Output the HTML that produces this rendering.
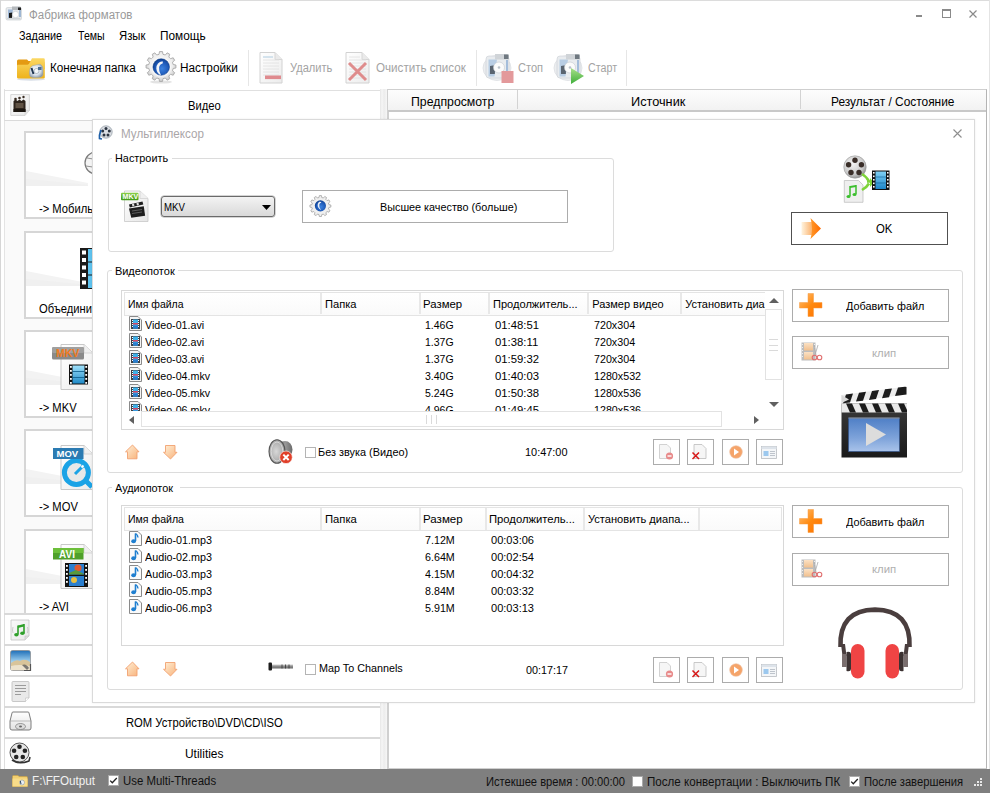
<!DOCTYPE html>
<html><head><meta charset="utf-8">
<style>
*{margin:0;padding:0;box-sizing:border-box}
html,body{width:990px;height:793px;overflow:hidden;background:#fff}
body{position:relative;font-family:"Liberation Sans",sans-serif;font-size:12px;color:#000}
.a{position:absolute}
.t{position:absolute;white-space:nowrap;line-height:12px;transform-origin:0 0}
.box{position:absolute;border:1px solid #dcdcdc}
.btn{position:absolute;border:1px solid #acacac;background:#fff}
.sep{position:absolute;width:1px;background:#e6e6e6}
.hl{position:absolute;height:2px;background:#d9d9d9}
.vd{position:absolute;width:2px;background:#e8e8e8}
svg{position:absolute;overflow:visible}
</style></head><body>

<!-- window border -->
<div class="a" style="left:0;top:0;width:990px;height:1px;background:#dcdcdc"></div>
<div class="a" style="left:0;top:0;width:1px;height:769px;background:#d6d6d6"></div>
<div class="a" style="left:989px;top:0;width:1px;height:769px;background:#e4e4e4"></div>

<!-- title bar -->
<div class="t" style="left:28.70px;top:9px;font-size:12px;color:#9a9a9a;transform:scaleX(0.9593)">Фабрика форматов</div>
<div class="a" style="left:916px;top:15px;width:6px;height:2px;background:#8a8a8a"></div>
<div class="a" style="left:942px;top:9px;width:9px;height:9px;border:1px solid #8a8a8a;border-top-width:2px"></div>
<svg style="left:969px;top:10px" width="8" height="8"><path d="M0.5 0.5L7.5 7.5M7.5 0.5L0.5 7.5" stroke="#8a8a8a" stroke-width="1.2"/></svg>

<!-- menu -->
<div class="t" style="left:18.90px;top:30px;font-size:12px;color:#000;transform:scaleX(0.9042)">Задание</div><div class="t" style="left:77.90px;top:30px;font-size:12px;color:#000;transform:scaleX(0.8833)">Темы</div><div class="t" style="left:118.66px;top:30px;font-size:12px;color:#000;transform:scaleX(0.9407)">Язык</div><div class="t" style="left:159.72px;top:30px;font-size:12px;color:#000;transform:scaleX(0.9844)">Помощь</div>

<!-- toolbar -->
<div class="t" style="left:49.62px;top:62px;font-size:12px;color:#000;transform:scaleX(0.9759)">Конечная папка</div><div class="t" style="left:179.52px;top:62px;font-size:12px;color:#000;transform:scaleX(0.9828)">Настройки</div><div class="t" style="left:289.50px;top:62px;font-size:12px;color:#a3a3a3;transform:scaleX(0.9239)">Удалить</div><div class="t" style="left:375.80px;top:62px;font-size:12px;color:#a3a3a3;transform:scaleX(0.9677)">Очистить список</div><div class="t" style="left:518.30px;top:62px;font-size:12px;color:#a3a3a3;transform:scaleX(0.9222)">Стоп</div><div class="t" style="left:587.80px;top:62px;font-size:12px;color:#a3a3a3;transform:scaleX(0.8909)">Старт</div>
<div class="sep" style="left:248px;top:50px;height:36px"></div>
<div class="sep" style="left:476px;top:50px;height:36px"></div>
<div class="sep" style="left:626px;top:50px;height:36px"></div>

<!-- LEFT PANEL -->
<div class="a" style="left:4px;top:89px;width:378px;height:680px;background:#fff;border-left:1px solid #e4e4e4"></div>
<div class="a" style="left:4px;top:90px;width:378px;height:31px;border:1px solid #e0e0e0;border-bottom-color:#dadada;background:#fff"></div>
<div class="t" style="left:187.56px;top:100px;font-size:12px;color:#000;transform:scaleX(0.9353)">Видео</div>
<div class="a" style="left:5px;top:121px;width:376px;height:493px;background:#fafafa"></div>
<!-- items -->
<div class="a" style="left:24px;top:131px;width:120px;height:88px;border:2px solid #d6d6d6;background:#fff;overflow:hidden"><svg style="left:0;top:0" width="120" height="90"><path d="M0 38L62 50L62 53L0 53Z" fill="#f3f3f3"/><path d="M0 46L62 52L62 53L0 53Z" fill="#eeeeee" opacity="0.5"/></svg></div>
<div class="t" style="left:39.40px;top:203px;font-size:12px;color:#000;transform:scaleX(0.9325)">-&gt; Мобильные</div>
<svg style="left:83px;top:149px" width="14" height="42"><circle cx="13" cy="14" r="11" fill="#f4f4f4" stroke="#7a7a7a" stroke-width="1.2"/><path d="M4 9Q13 12 22 9M3 17Q13 20 23 17M13 3Q7 14 13 25" stroke="#888" stroke-width="0.9" fill="none"/><path d="M9 35L13 31V39Z" fill="#111"/></svg>

<div class="a" style="left:24px;top:231px;width:120px;height:88px;border:2px solid #d6d6d6;background:#fff;overflow:hidden"><svg style="left:0;top:0" width="120" height="90"><path d="M0 38L62 50L62 53L0 53Z" fill="#f3f3f3"/><path d="M0 46L62 52L62 53L0 53Z" fill="#eeeeee" opacity="0.5"/></svg></div>
<div class="t" style="left:39.40px;top:303px;font-size:12px;color:#000;transform:scaleX(0.9325)">Объединить</div>
<svg style="left:80px;top:248px" width="14" height="40"><rect x="0" y="0" width="14" height="41" fill="#1a1a1a"/><rect x="8" y="1" width="6" height="39" fill="#5ec2ee"/><g fill="#fff"><rect x="2" y="2.5" width="4" height="4"/><rect x="2" y="10" width="4" height="4"/><rect x="2" y="17.5" width="4" height="4"/><rect x="2" y="25" width="4" height="4"/><rect x="2" y="32.5" width="4" height="4"/></g><path d="M8 14H14M8 27H14" stroke="#1a1a1a" stroke-width="1"/></svg>

<div class="a" style="left:24px;top:330px;width:120px;height:88px;border:2px solid #d6d6d6;background:#fff;overflow:hidden"><svg style="left:0;top:0" width="120" height="90"><path d="M0 38L62 50L62 53L0 53Z" fill="#f3f3f3"/><path d="M0 46L62 52L62 53L0 53Z" fill="#eeeeee" opacity="0.5"/></svg></div>
<div class="t" style="left:39.40px;top:402px;font-size:12px;color:#000;transform:scaleX(0.9325)">-&gt; MKV</div>
<svg style="left:51px;top:343px" width="42" height="48"><defs><linearGradient id="ipg" x1="0" y1="0" x2="1" y2="1"><stop offset="0" stop-color="#ffffff"/><stop offset="1" stop-color="#ececec"/></linearGradient><linearGradient id="ifl" x1="0" y1="0" x2="0" y2="1"><stop offset="0" stop-color="#9ee0fa"/><stop offset="1" stop-color="#1f8ac8"/></linearGradient></defs>
<path d="M10 1.5H33L42 10V46.5H10Z" fill="url(#ipg)" stroke="#c9c9c9" stroke-width="1"/><path d="M33 1.5V10H42" fill="#f0f0f0" stroke="#cfcfcf" stroke-width="0.8"/>
<rect x="1" y="4" width="32" height="12.5" rx="1.5" fill="#8a8a8a"/><rect x="1" y="4" width="32" height="6" rx="1.5" fill="#a0a0a0"/>
<text x="5" y="14.3" font-family="Liberation Sans" font-size="10.5" font-weight="bold" fill="#f07a20">MKV</text>
<rect x="18" y="21.5" width="19" height="20" fill="#111"/><rect x="21.5" y="22.5" width="12" height="18" fill="url(#ifl)"/><path d="M21.5 28.5H33.5M21.5 34.5H33.5" stroke="#0a5a8a" stroke-width="0.8"/>
<g fill="#fff"><rect x="19" y="23" width="1.8" height="1.8"/><rect x="19" y="27" width="1.8" height="1.8"/><rect x="19" y="31" width="1.8" height="1.8"/><rect x="19" y="35" width="1.8" height="1.8"/><rect x="19" y="39" width="1.8" height="1.8"/><rect x="34.3" y="23" width="1.8" height="1.8"/><rect x="34.3" y="27" width="1.8" height="1.8"/><rect x="34.3" y="31" width="1.8" height="1.8"/><rect x="34.3" y="35" width="1.8" height="1.8"/><rect x="34.3" y="39" width="1.8" height="1.8"/></g></svg>

<div class="a" style="left:24px;top:429px;width:120px;height:88px;border:2px solid #d6d6d6;background:#fff;overflow:hidden"><svg style="left:0;top:0" width="120" height="90"><path d="M0 38L62 50L62 53L0 53Z" fill="#f3f3f3"/><path d="M0 46L62 52L62 53L0 53Z" fill="#eeeeee" opacity="0.5"/></svg></div>
<div class="t" style="left:39.40px;top:501px;font-size:12px;color:#000;transform:scaleX(0.9325)">-&gt; MOV</div>
<svg style="left:52px;top:444px" width="42" height="47">
<path d="M9 1.5H32L41 10V45.5H9Z" fill="url(#ipg)" stroke="#c9c9c9" stroke-width="1"/><path d="M32 1.5V10H41" fill="#f0f0f0" stroke="#cfcfcf" stroke-width="0.8"/>
<circle cx="24.4" cy="28.6" r="12" fill="#e8e8e8" stroke="#1ba3e6" stroke-width="5"/><path d="M33 36L40 43" stroke="#1ba3e6" stroke-width="5"/><path d="M23 30L31.5 21.5" stroke="#1ba3e6" stroke-width="3"/><path d="M29.5 23.5L31.5 21.5" stroke="#fff" stroke-width="2"/>
<rect x="1" y="4" width="30.5" height="11" fill="#2b7bb2"/>
<text x="4.5" y="13.3" font-family="Liberation Sans" font-size="9.5" font-weight="bold" fill="#fff">MOV</text></svg>

<div class="a" style="left:24px;top:529px;width:120px;height:86px;border:2px solid #d6d6d6;background:#fff;overflow:hidden"><svg style="left:0;top:0" width="120" height="90"><path d="M0 38L62 50L62 53L0 53Z" fill="#f3f3f3"/><path d="M0 46L62 52L62 53L0 53Z" fill="#eeeeee" opacity="0.5"/></svg></div>
<div class="t" style="left:39.40px;top:601px;font-size:12px;color:#000;transform:scaleX(0.9325)">-&gt; AVI</div>
<svg style="left:52px;top:543px" width="42" height="47">
<path d="M9 1.5H32L41 10V45.5H9Z" fill="url(#ipg)" stroke="#c9c9c9" stroke-width="1"/><path d="M32 1.5V10H41" fill="#f0f0f0" stroke="#cfcfcf" stroke-width="0.8"/>
<rect x="13" y="20" width="23" height="24" fill="#141414"/><rect x="17" y="21" width="15" height="10.5" fill="#2a7fd0"/><rect x="17" y="33" width="15" height="10" fill="#2a7fd0"/><circle cx="26" cy="25" r="3.5" fill="#e05a30"/><circle cx="22" cy="37" r="3" fill="#e8c040"/><path d="M17 30L24 27L32 31V31.5H17Z" fill="#5a9a3a"/>
<g fill="#fff"><rect x="14" y="22" width="1.8" height="1.8"/><rect x="14" y="26" width="1.8" height="1.8"/><rect x="14" y="30" width="1.8" height="1.8"/><rect x="14" y="34" width="1.8" height="1.8"/><rect x="14" y="38" width="1.8" height="1.8"/><rect x="33.2" y="22" width="1.8" height="1.8"/><rect x="33.2" y="26" width="1.8" height="1.8"/><rect x="33.2" y="30" width="1.8" height="1.8"/><rect x="33.2" y="34" width="1.8" height="1.8"/><rect x="33.2" y="38" width="1.8" height="1.8"/></g>
<rect x="1" y="5" width="30.5" height="11.5" fill="#4fa02a"/><rect x="1" y="5" width="30.5" height="5" fill="#6cbf3a"/>
<text x="7" y="14.5" font-family="Liberation Sans" font-size="10" font-weight="bold" fill="#fff">AVI</text></svg>

<!-- bottom rows -->
<div class="a" style="left:4px;top:613px;width:378px;height:156px;background:#fff;border-left:1px solid #dedede;border-right:1px solid #dedede"></div>
<div class="hl" style="left:4px;top:613px;width:378px"></div>
<div class="hl" style="left:4px;top:644px;width:378px"></div>
<div class="hl" style="left:4px;top:675px;width:378px"></div>
<div class="hl" style="left:4px;top:706px;width:378px"></div>
<div class="hl" style="left:4px;top:737px;width:378px"></div>
<div class="t" style="left:125.96px;top:717px;font-size:12px;color:#000;transform:scaleX(0.9367)">ROM Устройство\DVD\CD\ISO</div><div class="t" style="left:184.81px;top:748px;font-size:12px;color:#000;transform:scaleX(0.9947)">Utilities</div>

<!-- RIGHT TABLE -->
<div class="a" style="left:380px;top:89px;width:8px;height:680px;background:linear-gradient(to right,#e6e6e6,#f6f6f6 25%,#ececec 50%,#f4f4f4 80%,#fff)"></div>
<div class="a" style="left:387px;top:89px;width:600px;height:680px;border:1px solid #cfcfcf;border-left:2px solid #d0d0d0;border-right-color:#b4b4b4;background:#fff"></div>
<div class="a" style="left:388px;top:90px;width:598px;height:22px;background:linear-gradient(#fdfdfd,#f2f2f2);border-bottom:2px solid #c9c9c9"></div>
<div class="a" style="left:517px;top:90px;width:1px;height:19px;background:#d3d3d3"></div>
<div class="a" style="left:800px;top:90px;width:1px;height:19px;background:#d3d3d3"></div>
<div class="t" style="left:410.68px;top:96px;font-size:12px;color:#000;transform:scaleX(1.0238)">Предпросмотр</div><div class="t" style="left:630.94px;top:96px;font-size:12px;color:#000;transform:scaleX(1.0600)">Источник</div><div class="t" style="left:831.11px;top:96px;font-size:12px;color:#000;transform:scaleX(0.9919)">Результат / Состояние</div>

<!-- STATUS BAR -->
<div class="a" style="left:0;top:769px;width:990px;height:24px;background:#7f7f7f"></div>
<div class="t" style="left:31.63px;top:775px;font-size:12px;color:#f2f2f2;transform:scaleX(0.9734)">F:\FFOutput</div><div class="t" style="left:122.75px;top:775px;font-size:12px;color:#111;transform:scaleX(0.9495)">Use Multi-Threads</div><div class="t" style="left:486.37px;top:776px;font-size:12px;color:#111;transform:scaleX(0.9304)">Истекшее время : 00:00:00</div><div class="t" style="left:646.53px;top:776px;font-size:12px;color:#111;transform:scaleX(0.9658)">После конвертации : Выключить ПК</div><div class="t" style="left:864.07px;top:776px;font-size:12px;color:#111;transform:scaleX(0.9333)">После завершения</div>
<div class="a" style="left:108px;top:775px;width:11px;height:11px;background:#fff;border:1px solid #aaa"></div>
<svg style="left:108px;top:775px" width="11" height="11"><path d="M2.2 5.6L4.3 7.8L8.8 3" fill="none" stroke="#222" stroke-width="1.3"/></svg>
<div class="a" style="left:632px;top:776px;width:11px;height:11px;background:#fff;border:1px solid #aaa"></div>
<div class="a" style="left:849px;top:776px;width:11px;height:11px;background:#fff;border:1px solid #aaa"></div>
<svg style="left:849px;top:776px" width="11" height="11"><path d="M2.2 5.6L4.3 7.8L8.8 3" fill="none" stroke="#222" stroke-width="1.3"/></svg>
<svg style="left:974px;top:778px" width="9" height="9"><g fill="#e8e8e8"><rect x="6" y="0" width="2" height="2"/><rect x="3" y="3" width="2" height="2"/><rect x="6" y="3" width="2" height="2"/><rect x="0" y="6" width="2" height="2"/><rect x="3" y="6" width="2" height="2"/><rect x="6" y="6" width="2" height="2"/></g></svg>
<!-- title icon -->
<svg style="left:4px;top:5px" width="18" height="16">
<path d="M2 4Q2 2.5 3.5 2.5H16Q17.5 2.5 17.5 4V13.5Q17.5 15 16 15H3.5Q2 15 2 13.5Z" fill="#e6e9ec" stroke="#c4c9ce" stroke-width="0.6"/>
<path d="M4 4.5H9L7.5 14H4Z" fill="#9fb8d6"/><path d="M5 8L8.5 7.5L8 13H5Z" fill="#1a1a1a"/>
<circle cx="11.5" cy="9.5" r="3.2" fill="#ffffff" stroke="#b8c0c8" stroke-width="0.5"/>
<path d="M8 1.5H16Q17 1.5 17 3V5H8Z" fill="#b4b8bc"/><path d="M14 2.5H17V5H14Z" fill="#202020"/>
<path d="M16 5V12" stroke="#6d94c2" stroke-width="1.2"/>
<path d="M3 13.5H16.5" stroke="#d0d4d8" stroke-width="1.2"/></svg>

<!-- folder icon -->
<svg style="left:16px;top:57px" width="30" height="24"><defs>
<linearGradient id="fg1" x1="0" y1="0" x2="0" y2="1"><stop offset="0" stop-color="#fbd865"/><stop offset="1" stop-color="#eeb21a"/></linearGradient>
<radialGradient id="fg2" cx="0.45" cy="0.45" r="0.6"><stop offset="0" stop-color="#ffffff"/><stop offset="0.6" stop-color="#d9e2ec"/><stop offset="1" stop-color="#8d9aa8"/></radialGradient></defs>
<ellipse cx="15" cy="22.3" rx="14" ry="1.5" fill="#c9d2de" opacity="0.7"/>
<path d="M1 4Q1 2.5 2.5 2.5H11L12.5 4H27Q28.5 4 28.5 5.5V12H1Z" fill="#e49a12"/>
<path d="M16 1.3H27.5Q28.8 1.3 28.8 2.6V20.5Q28.8 21.6 27.5 21.6H2.4Q1 21.6 1 20.2V8.8Q1 7.8 2 7.8H11.5Q13 7.8 14 5Z" fill="url(#fg1)"/>
<path d="M13.5 15Q13.5 8.5 19 8.2L24 7.2Q27 8.5 27 13V17Q27 20.5 22 20.5H17Q13.5 20.5 13.5 17Z" fill="url(#fg2)" stroke="#9aa6b2" stroke-width="0.5"/>
<path d="M15.5 11L17.5 17" stroke="#1f3550" stroke-width="2"/><circle cx="20.5" cy="14" r="2.5" fill="#f4f8fb" stroke="#8c99a6" stroke-width="0.6"/><rect x="22" y="10" width="3.5" height="3" fill="#4d6f92"/>
</svg>

<!-- gear icon -->
<svg style="left:144px;top:50px" width="34" height="34"><defs>
<radialGradient id="gg1" cx="0.5" cy="0.45" r="0.55"><stop offset="0" stop-color="#fdfdfd"/><stop offset="0.7" stop-color="#eeeeee"/><stop offset="1" stop-color="#c8c8c8"/></radialGradient>
<radialGradient id="gg2" cx="0.55" cy="0.6" r="0.6"><stop offset="0" stop-color="#3b82e0"/><stop offset="0.7" stop-color="#1c56b4"/><stop offset="1" stop-color="#0e3f8c"/></radialGradient></defs>
<ellipse cx="17" cy="32" rx="11" ry="1.6" fill="#dcdcdc" opacity="0.8"/>
<path id="gearp" d="M15.01 4.36L15.51 1.57L18.49 1.57L18.99 4.36L21.35 4.99L23.17 2.83L25.75 4.32L24.79 6.98L26.52 8.71L29.18 7.75L30.67 10.33L28.51 12.15L29.14 14.51L31.93 15.01L31.93 17.99L29.14 18.49L28.51 20.85L30.67 22.67L29.18 25.25L26.52 24.29L24.79 26.02L25.75 28.68L23.17 30.17L21.35 28.01L18.99 28.64L18.49 31.43L15.51 31.43L15.01 28.64L12.65 28.01L10.83 30.17L8.25 28.68L9.21 26.02L7.48 24.29L4.82 25.25L3.33 22.67L5.49 20.85L4.86 18.49L2.07 17.99L2.07 15.01L4.86 14.51L5.49 12.15L3.33 10.33L4.82 7.75L7.48 8.71L9.21 6.98L8.25 4.32L10.83 2.83L12.65 4.99Z" fill="url(#gg1)" stroke="#a9a9a9" stroke-width="0.9"/>
<circle cx="17.2" cy="17" r="9.6" fill="#fbfbfb"/>
<circle cx="17.2" cy="17" r="8.3" fill="url(#gg2)" stroke="#0d3a80" stroke-width="0.5"/>
<path d="M18.6 11.2Q12.5 12 12.3 18.5Q12.8 23.5 17 25.2Q14.6 21.5 15.1 17.6Q15.6 14.2 18.9 13.2Z" fill="#f2f4f8"/>
</svg>

<!-- delete icon -->
<svg style="left:258px;top:51px" width="26" height="34"><defs><linearGradient id="pg" x1="0" y1="0" x2="1" y2="1"><stop offset="0" stop-color="#ffffff"/><stop offset="1" stop-color="#ececec"/></linearGradient></defs>
<path d="M2 1.5H17L24 8.5V32H2Z" fill="url(#pg)" stroke="#d2d2d2"/><path d="M17 1.5V8.5H24" fill="#eaeaea" stroke="#d6d6d6"/>
<g stroke="#e0e0e0" stroke-width="0.8"><path d="M5 6H15M5 9H21M5 12H21M5 15H21M5 18H21M5 21H21M5 24H21"/></g><path d="M5 6H15" stroke="#b9d6ea"/>
<rect x="7" y="24.5" width="16" height="3.6" fill="#df8a8e"/></svg>

<!-- clear icon -->
<svg style="left:344px;top:51px" width="28" height="34">
<path d="M2 1.5H18L25 8.5V32H2Z" fill="url(#pg)" stroke="#d2d2d2"/><path d="M18 1.5V8.5H25" fill="#eaeaea" stroke="#d6d6d6"/>
<g stroke="#e0e0e0" stroke-width="0.8"><path d="M5 6H16M5 9H22M5 12H22M5 15H22M5 18H22M5 21H22M5 24H22M5 27H22"/></g>
<path d="M5 12L22 29M22 12L5 29" stroke="#df8c8c" stroke-width="3"/></svg>

<!-- stop icon -->
<svg style="left:482px;top:52px" width="34" height="32">
<ellipse cx="15" cy="16" rx="14" ry="12.5" fill="#eceef0" stroke="#dde0e3" stroke-width="0.8"/>
<path d="M4 7Q4 4 7 4H24Q27 4 27 7V23Q27 26 24 26H7Q4 26 4 23Z" fill="#e9ecef" stroke="#c9ced3" stroke-width="0.6"/>
<path d="M6.5 7.5H15L12.5 24.5H6.5Z" fill="#b8cde4"/><path d="M8 14L13.5 13L12.8 22H8Z" fill="#5a6470"/>
<circle cx="17" cy="15.5" r="5.5" fill="#fbfbfb" stroke="#c4cad0" stroke-width="0.6"/><circle cx="17" cy="15.5" r="1.3" fill="#b8c0c8"/>
<path d="M13 2H25Q27 2 27 4.5V7.5H13Z" fill="#d0d4d8"/><path d="M22 2.5H26.5V7H22Z" fill="#6f7880"/>
<path d="M25 8V22" stroke="#9db8d8" stroke-width="1.8"/>
<rect x="19.5" y="19" width="12" height="12" fill="#e3999b"/></svg>

<!-- start icon -->
<svg style="left:553px;top:52px" width="34" height="33">
<ellipse cx="15" cy="16" rx="14" ry="12.5" fill="#eceef0" stroke="#dde0e3" stroke-width="0.8"/>
<path d="M4 7Q4 4 7 4H24Q27 4 27 7V23Q27 26 24 26H7Q4 26 4 23Z" fill="#e9ecef" stroke="#c9ced3" stroke-width="0.6"/>
<path d="M6.5 7.5H15L12.5 24.5H6.5Z" fill="#b8cde4"/><path d="M8 14L13.5 13L12.8 22H8Z" fill="#5a6470"/>
<circle cx="17" cy="15.5" r="5.5" fill="#fbfbfb" stroke="#c4cad0" stroke-width="0.6"/><circle cx="17" cy="15.5" r="1.3" fill="#b8c0c8"/>
<path d="M13 2H25Q27 2 27 4.5V7.5H13Z" fill="#d0d4d8"/><path d="M22 2.5H26.5V7H22Z" fill="#6f7880"/>
<path d="M25 8V22" stroke="#9db8d8" stroke-width="1.8"/>
<defs><linearGradient id="grn" x1="0" y1="0" x2="0" y2="1"><stop offset="0" stop-color="#a8e08a"/><stop offset="1" stop-color="#3fae3a"/></linearGradient></defs>
<path d="M18 16L31 24L18 32Z" fill="url(#grn)"/></svg>

<!-- left header clapper icon -->
<svg style="left:10px;top:94px" width="21" height="23"><defs><linearGradient id="lpg" x1="0" y1="0" x2="1" y2="1"><stop offset="0" stop-color="#fafafa"/><stop offset="1" stop-color="#e8e8e8"/></linearGradient></defs>
<path d="M0.8 0.6H19.4V16.5L15 21.4H0.8Z" fill="url(#lpg)" stroke="#d0d0d0" stroke-width="0.9"/><path d="M15 21.4V16.5H19.4" fill="#e2e2e2" stroke="#cccccc" stroke-width="0.6"/>
<path d="M3.5 7L5.5 5.5L7.5 7L9.5 5.5L11.5 7L13.5 5.5L15.5 7V18H3.5Z" fill="#2e241c"/>
<g fill="#3a2e24"><circle cx="5.5" cy="5" r="1.3"/><circle cx="9.5" cy="4" r="1.3"/><circle cx="13.5" cy="3" r="1.2"/></g>
<rect x="5.5" y="9" width="8" height="5" fill="#8a7866" opacity="0.55"/><rect x="3.5" y="15" width="12" height="3" fill="#1c1610"/></svg>

<!-- audio row icon -->
<svg style="left:10px;top:619px" width="21" height="23">
<path d="M1 1H19V17L15 21H1Z" fill="url(#lpg)" stroke="#c4c4c4" stroke-width="0.8"/><path d="M15 21V17H19" fill="#ddd" stroke="#c4c4c4" stroke-width="0.6"/>
<path d="M8 6.5V15.5M14 5V14" stroke="#2fa02a" stroke-width="1.6"/><path d="M8 6.5L14 5V7.5L8 9Z" fill="#2fa02a"/><ellipse cx="6.4" cy="15.7" rx="2.2" ry="1.7" fill="#2fa02a"/><ellipse cx="12.4" cy="14.2" rx="2.2" ry="1.7" fill="#2fa02a"/>
<path d="M3 8Q2 11 3 14M17.5 8Q18.5 11 17.5 14" stroke="#bbb" stroke-width="0.7" fill="none"/></svg>

<!-- image icon -->
<svg style="left:10px;top:650px" width="22" height="23"><defs><linearGradient id="sky" x1="0" y1="0" x2="0" y2="1"><stop offset="0" stop-color="#1f6fb8"/><stop offset="0.55" stop-color="#9fd0ef"/><stop offset="1" stop-color="#e9dcc0"/></linearGradient></defs>
<rect x="0.5" y="0.5" width="20" height="20" rx="2" fill="url(#sky)" stroke="#8a8a8a" stroke-width="0.7"/>
<path d="M1 13Q6 9 10 11Q15 8 20 12V20H1Z" fill="#d8c49a"/><path d="M1 16Q8 14 20 16V20H1Z" fill="#ece2cc"/><path d="M12 15Q16 13 19 18L17 20Z" fill="#4c4c4c" opacity="0.7"/>
<path d="M20.5 14V20.5H14" fill="none" stroke="#555" stroke-width="1.2"/></svg>

<!-- doc icon -->
<svg style="left:11px;top:681px" width="20" height="22">
<path d="M1 1.5Q1 0.5 2 0.5H17Q18 0.5 18 1.5V17L14.5 20.5H2Q1 20.5 1 19.5Z" fill="#e9e9e9" stroke="#bdbdbd" stroke-width="0.8"/>
<g stroke="#9b9b9b" stroke-width="1.2"><path d="M4 4.5H15M4 7.5H15M4 10.5H15M4 13.5H10"/></g><path d="M14.5 20.5V17H18" fill="#fff" stroke="#bdbdbd" stroke-width="0.6"/></svg>

<!-- ROM icon -->
<svg style="left:9px;top:711px" width="23" height="23"><defs><linearGradient id="rg" x1="0" y1="0" x2="0" y2="1"><stop offset="0" stop-color="#ffffff"/><stop offset="1" stop-color="#e2e2e2"/></linearGradient></defs>
<path d="M3 2Q3 1 4 1H19Q20 1 20 2L22 10V17Q22 19 20 19H3Q1 19 1 17V10Z" fill="url(#rg)" stroke="#6f6f6f" stroke-width="0.9"/>
<path d="M1 10H22" stroke="#999" stroke-width="0.6"/><ellipse cx="11.5" cy="15.5" rx="5" ry="3" fill="#ddd" stroke="#777" stroke-width="0.7"/><ellipse cx="11.5" cy="15.5" rx="1.5" ry="0.9" fill="#666"/></svg>

<!-- Utilities icon -->
<svg style="left:9px;top:742px" width="23" height="24">
<circle cx="10.5" cy="10.5" r="9.5" fill="#e6e6e6" stroke="#555" stroke-width="1"/>
<g fill="#222"><circle cx="10.5" cy="4.8" r="2.3"/><circle cx="15.9" cy="8.7" r="2.3"/><circle cx="13.8" cy="15" r="2.3"/><circle cx="7.2" cy="15" r="2.3"/><circle cx="5.1" cy="8.7" r="2.3"/></g>
<path d="M3 18Q10 23 20 19L21 15" fill="none" stroke="#333" stroke-width="1.6"/></svg>

<!-- status folder -->
<svg style="left:12px;top:775px" width="16" height="12"><path d="M0.5 1.5Q0.5 0.5 1.5 0.5H6L7 1.5H14.5Q15.5 1.5 15.5 2.5V11.5H0.5Z" fill="#f2cf70" stroke="#c9a042" stroke-width="0.6"/><path d="M0.5 3.5H15.5V11.5H0.5Z" fill="#f8dc8a"/><circle cx="10" cy="7.5" r="2.5" fill="#e8eef4" stroke="#7a8894" stroke-width="0.5"/><path d="M8.3 6L9 9" stroke="#284060" stroke-width="1"/></svg>


<!-- ===== DIALOG ===== -->
<div class="a" style="left:92px;top:119px;width:883px;height:584px;background:#fff;border:1px solid #dadada;box-shadow:0 0 2px rgba(0,0,0,0.08)"></div>
<div class="t" style="left:120.93px;top:128px;font-size:12px;color:#aaa6a8;transform:scaleX(0.9702)">Мультиплексор</div>
<svg style="left:953px;top:129px" width="9" height="9"><path d="M0.5 0.5L8.5 8.5M8.5 0.5L0.5 8.5" stroke="#8e8e8e" stroke-width="1.1"/></svg>

<!-- group Настроить -->
<div class="box" style="left:108px;top:158px;width:506px;height:94px;border-radius:3px"></div>
<div class="a" style="left:112px;top:152px;width:60px;height:12px;background:#fff"></div>
<div class="t" style="left:115.01px;top:152px;font-size:11px;color:#000;transform:scaleX(0.9887)">Настроить</div>
<div class="a" style="left:161px;top:196px;width:114px;height:21px;border:1px solid #6a6a6a;border-radius:3px;background:linear-gradient(#f3f3f3,#e6e6e6 50%,#d9d9d9);box-shadow:0 0 0 0.5px #aaa"></div>
<div class="t" style="left:163.82px;top:201px;font-size:11px;color:#000;transform:scaleX(0.8783)">MKV</div>
<svg style="left:262px;top:205px" width="9" height="5"><path d="M0 0H9L4.5 5Z" fill="#000"/></svg>
<div class="btn" style="left:302px;top:190px;width:266px;height:33px"></div>
<div class="t" style="left:380.02px;top:201px;font-size:11px;color:#000;transform:scaleX(0.9833)">Высшее качество (больше)</div>
<div class="a" style="left:791px;top:212px;width:157px;height:33px;border:1px solid #505050;background:#fff"></div>
<div class="t" style="left:875.80px;top:223px;font-size:12px;color:#000;transform:scaleX(0.9471)">OK</div>

<!-- group Видеопоток -->
<div class="box" style="left:107px;top:270px;width:856px;height:203px;border-radius:3px"></div>
<div class="a" style="left:112px;top:264px;width:66px;height:12px;background:#fff"></div>
<div class="t" style="left:114.90px;top:265px;font-size:11px;color:#000">Видеопоток</div>
<div class="a" style="left:121px;top:290px;width:663px;height:140px;border:1px solid #d8d8d8;background:#fff"></div>
<div class="a" style="left:124px;top:292px;width:641px;height:24px;border:1px solid #e4e4e4;border-right:none;background:linear-gradient(#fff,#fafafa)"></div>
<div class="vd" style="left:320px;top:293px;height:21px"></div>
<div class="vd" style="left:419px;top:293px;height:21px"></div>
<div class="vd" style="left:488px;top:293px;height:21px"></div>
<div class="vd" style="left:587px;top:293px;height:21px"></div>
<div class="vd" style="left:680px;top:293px;height:21px"></div>
<div class="t" style="left:128.05px;top:298px;font-size:11px;color:#000;transform:scaleX(0.9517)">Имя файла</div><div class="t" style="left:324.99px;top:298px;font-size:11px;color:#000;transform:scaleX(1.0133)">Папка</div><div class="t" style="left:422.96px;top:298px;font-size:11px;color:#000;transform:scaleX(1.0351)">Размер</div><div class="t" style="left:493.29px;top:298px;font-size:11px;color:#000;transform:scaleX(1.0061)">Продолжитель...</div><div class="t" style="left:592.20px;top:298px;font-size:11px;color:#000">Размер видео</div>
<div class="a" style="left:682px;top:293px;width:83px;height:21px;overflow:hidden">
<div class="a" style="left:-682px;top:-293px;width:990px;height:400px"><div class="t" style="left:685.20px;top:298px;font-size:11px;color:#000">Установить диа</div></div></div>
<div class="a" style="left:122px;top:316px;width:643px;height:95px;overflow:hidden">
<div class="a" style="left:-122px;top:-316px;width:990px;height:500px">
<div class="t" style="left:145.20px;top:319px;font-size:11px;color:#000;transform:scaleX(0.9705)">Video-01.avi</div><div class="t" style="left:424.74px;top:319px;font-size:11px;color:#000;transform:scaleX(0.9552)">1.46G</div><div class="t" style="left:494.60px;top:319px;font-size:11px;color:#000;transform:scaleX(1.0279)">01:48:51</div><div class="t" style="left:593.80px;top:319px;font-size:11px;color:#000;transform:scaleX(0.9738)">720x304</div>
<svg style="left:129px;top:316px" width="13" height="15"><path d="M0.5 0.5H9L12.5 4V14.5H0.5Z" fill="#f4f4f4" stroke="#8a8a8a"/><rect x="2" y="3" width="9" height="10" fill="#3a4048"/><rect x="4" y="3.5" width="5" height="9" fill="#3fb0e8"/><rect x="4" y="7" width="5" height="1.6" fill="#d04a6a"/><rect x="4" y="9.5" width="5" height="3" fill="#2a7ed0"/><g fill="#fff"><rect x="3" y="4" width="1" height="1"/><rect x="3" y="6" width="1" height="1"/><rect x="3" y="8" width="1" height="1"/><rect x="3" y="10" width="1" height="1"/><rect x="9" y="4" width="1" height="1"/><rect x="9" y="6" width="1" height="1"/><rect x="9" y="8" width="1" height="1"/><rect x="9" y="10" width="1" height="1"/></g></svg>
<div class="t" style="left:145.20px;top:336px;font-size:11px;color:#000;transform:scaleX(0.9705)">Video-02.avi</div><div class="t" style="left:424.74px;top:336px;font-size:11px;color:#000;transform:scaleX(0.9552)">1.37G</div><div class="t" style="left:494.60px;top:336px;font-size:11px;color:#000;transform:scaleX(1.0279)">01:38:11</div><div class="t" style="left:593.80px;top:336px;font-size:11px;color:#000;transform:scaleX(0.9738)">720x304</div>
<svg style="left:129px;top:333px" width="13" height="15"><path d="M0.5 0.5H9L12.5 4V14.5H0.5Z" fill="#f4f4f4" stroke="#8a8a8a"/><rect x="2" y="3" width="9" height="10" fill="#3a4048"/><rect x="4" y="3.5" width="5" height="9" fill="#3fb0e8"/><rect x="4" y="7" width="5" height="1.6" fill="#d04a6a"/><rect x="4" y="9.5" width="5" height="3" fill="#2a7ed0"/><g fill="#fff"><rect x="3" y="4" width="1" height="1"/><rect x="3" y="6" width="1" height="1"/><rect x="3" y="8" width="1" height="1"/><rect x="3" y="10" width="1" height="1"/><rect x="9" y="4" width="1" height="1"/><rect x="9" y="6" width="1" height="1"/><rect x="9" y="8" width="1" height="1"/><rect x="9" y="10" width="1" height="1"/></g></svg>
<div class="t" style="left:145.20px;top:353px;font-size:11px;color:#000;transform:scaleX(0.9705)">Video-03.avi</div><div class="t" style="left:424.74px;top:353px;font-size:11px;color:#000;transform:scaleX(0.9552)">1.37G</div><div class="t" style="left:494.60px;top:353px;font-size:11px;color:#000;transform:scaleX(1.0279)">01:59:32</div><div class="t" style="left:593.80px;top:353px;font-size:11px;color:#000;transform:scaleX(0.9738)">720x304</div>
<svg style="left:129px;top:350px" width="13" height="15"><path d="M0.5 0.5H9L12.5 4V14.5H0.5Z" fill="#f4f4f4" stroke="#8a8a8a"/><rect x="2" y="3" width="9" height="10" fill="#3a4048"/><rect x="4" y="3.5" width="5" height="9" fill="#3fb0e8"/><rect x="4" y="7" width="5" height="1.6" fill="#d04a6a"/><rect x="4" y="9.5" width="5" height="3" fill="#2a7ed0"/><g fill="#fff"><rect x="3" y="4" width="1" height="1"/><rect x="3" y="6" width="1" height="1"/><rect x="3" y="8" width="1" height="1"/><rect x="3" y="10" width="1" height="1"/><rect x="9" y="4" width="1" height="1"/><rect x="9" y="6" width="1" height="1"/><rect x="9" y="8" width="1" height="1"/><rect x="9" y="10" width="1" height="1"/></g></svg>
<div class="t" style="left:145.20px;top:370px;font-size:11px;color:#000;transform:scaleX(0.9705)">Video-04.mkv</div><div class="t" style="left:424.74px;top:370px;font-size:11px;color:#000;transform:scaleX(0.9552)">3.40G</div><div class="t" style="left:494.60px;top:370px;font-size:11px;color:#000;transform:scaleX(1.0279)">01:40:03</div><div class="t" style="left:593.80px;top:370px;font-size:11px;color:#000;transform:scaleX(0.9738)">1280x532</div>
<svg style="left:129px;top:367px" width="13" height="15"><path d="M0.5 0.5H9L12.5 4V14.5H0.5Z" fill="#f4f4f4" stroke="#8a8a8a"/><rect x="2" y="3" width="9" height="10" fill="#3a4048"/><rect x="4" y="3.5" width="5" height="9" fill="#3fb0e8"/><rect x="4" y="7" width="5" height="1.6" fill="#d04a6a"/><rect x="4" y="9.5" width="5" height="3" fill="#2a7ed0"/><g fill="#fff"><rect x="3" y="4" width="1" height="1"/><rect x="3" y="6" width="1" height="1"/><rect x="3" y="8" width="1" height="1"/><rect x="3" y="10" width="1" height="1"/><rect x="9" y="4" width="1" height="1"/><rect x="9" y="6" width="1" height="1"/><rect x="9" y="8" width="1" height="1"/><rect x="9" y="10" width="1" height="1"/></g></svg>
<div class="t" style="left:145.20px;top:387px;font-size:11px;color:#000;transform:scaleX(0.9705)">Video-05.mkv</div><div class="t" style="left:424.74px;top:387px;font-size:11px;color:#000;transform:scaleX(0.9552)">5.24G</div><div class="t" style="left:494.60px;top:387px;font-size:11px;color:#000;transform:scaleX(1.0279)">01:50:38</div><div class="t" style="left:593.80px;top:387px;font-size:11px;color:#000;transform:scaleX(0.9738)">1280x536</div>
<svg style="left:129px;top:384px" width="13" height="15"><path d="M0.5 0.5H9L12.5 4V14.5H0.5Z" fill="#f4f4f4" stroke="#8a8a8a"/><rect x="2" y="3" width="9" height="10" fill="#3a4048"/><rect x="4" y="3.5" width="5" height="9" fill="#3fb0e8"/><rect x="4" y="7" width="5" height="1.6" fill="#d04a6a"/><rect x="4" y="9.5" width="5" height="3" fill="#2a7ed0"/><g fill="#fff"><rect x="3" y="4" width="1" height="1"/><rect x="3" y="6" width="1" height="1"/><rect x="3" y="8" width="1" height="1"/><rect x="3" y="10" width="1" height="1"/><rect x="9" y="4" width="1" height="1"/><rect x="9" y="6" width="1" height="1"/><rect x="9" y="8" width="1" height="1"/><rect x="9" y="10" width="1" height="1"/></g></svg>
<div class="t" style="left:145.20px;top:404px;font-size:11px;color:#000;transform:scaleX(0.9705)">Video-06.mkv</div><div class="t" style="left:424.74px;top:404px;font-size:11px;color:#000;transform:scaleX(0.9552)">4.96G</div><div class="t" style="left:494.60px;top:404px;font-size:11px;color:#000;transform:scaleX(1.0279)">01:49:45</div><div class="t" style="left:593.80px;top:404px;font-size:11px;color:#000;transform:scaleX(0.9738)">1280x536</div>
<svg style="left:129px;top:401px" width="13" height="15"><path d="M0.5 0.5H9L12.5 4V14.5H0.5Z" fill="#f4f4f4" stroke="#8a8a8a"/><rect x="2" y="3" width="9" height="10" fill="#3a4048"/><rect x="4" y="3.5" width="5" height="9" fill="#3fb0e8"/><rect x="4" y="7" width="5" height="1.6" fill="#d04a6a"/><rect x="4" y="9.5" width="5" height="3" fill="#2a7ed0"/><g fill="#fff"><rect x="3" y="4" width="1" height="1"/><rect x="3" y="6" width="1" height="1"/><rect x="3" y="8" width="1" height="1"/><rect x="3" y="10" width="1" height="1"/><rect x="9" y="4" width="1" height="1"/><rect x="9" y="6" width="1" height="1"/><rect x="9" y="8" width="1" height="1"/><rect x="9" y="10" width="1" height="1"/></g></svg>
</div></div>
<!-- v scrollbar -->
<svg style="left:769px;top:298px" width="10" height="5"><path d="M0 5H10L5 0Z" fill="#606060"/></svg>
<div class="a" style="left:765px;top:309px;width:17px;height:71px;border:1px solid #e2e2e2;background:#fff"></div>
<div class="a" style="left:769px;top:339px;width:9px;height:1px;background:#dadada"></div>
<div class="a" style="left:769px;top:345px;width:9px;height:1px;background:#dadada"></div>
<div class="a" style="left:769px;top:350px;width:9px;height:1px;background:#dadada"></div>
<svg style="left:769px;top:402px" width="10" height="5"><path d="M0 0H10L5 5Z" fill="#606060"/></svg>
<!-- h scrollbar -->
<svg style="left:129px;top:416px" width="5" height="8"><path d="M5 0V8L0 4Z" fill="#606060"/></svg>
<div class="a" style="left:141px;top:411px;width:581px;height:16px;border:1px solid #e2e2e2;background:#fff"></div>
<div class="a" style="left:426px;top:415px;width:1px;height:9px;background:#dadada"></div>
<div class="a" style="left:431px;top:415px;width:1px;height:9px;background:#dadada"></div>
<div class="a" style="left:436px;top:415px;width:1px;height:9px;background:#dadada"></div>
<svg style="left:754px;top:416px" width="5" height="8"><path d="M0 0V8L5 4Z" fill="#606060"/></svg>

<div class="btn" style="left:792px;top:289px;width:157px;height:33px"></div>
<div class="t" style="left:845.60px;top:300px;font-size:11px;color:#000;transform:scaleX(0.9861)">Добавить файл</div>
<div class="btn" style="left:792px;top:336px;width:157px;height:33px"></div>
<div class="t" style="left:871.80px;top:347px;font-size:11px;color:#b0b0b0;transform:scaleX(1.0348)">клип</div>

<div class="a" style="left:305px;top:447px;width:11px;height:11px;border:1px solid #b4b4b4;background:#fff"></div>
<div class="t" style="left:318.41px;top:446px;font-size:11px;color:#000;transform:scaleX(0.9900)">Без звука (Видео)</div><div class="t" style="left:525.01px;top:446px;font-size:11px;color:#000;transform:scaleX(0.9929)">10:47:00</div>
<div class="btn" style="left:653px;top:439px;width:27px;height:26px"></div>
<div class="btn" style="left:687px;top:439px;width:27px;height:26px"></div>
<div class="btn" style="left:722px;top:439px;width:27px;height:26px"></div>
<div class="btn" style="left:756px;top:439px;width:27px;height:26px"></div>

<!-- group Аудиопоток -->
<div class="box" style="left:107px;top:487px;width:856px;height:203px;border-radius:3px"></div>
<div class="a" style="left:112px;top:481px;width:68px;height:12px;background:#fff"></div>
<div class="t" style="left:115.30px;top:482px;font-size:11px;color:#000;transform:scaleX(0.9881)">Аудиопоток</div>
<div class="a" style="left:121px;top:505px;width:663px;height:141px;border:1px solid #d8d8d8;background:#fff"></div>
<div class="a" style="left:124px;top:507px;width:658px;height:24px;border:1px solid #e4e4e4;background:linear-gradient(#fff,#fafafa)"></div>
<div class="vd" style="left:320px;top:508px;height:22px"></div>
<div class="vd" style="left:419px;top:508px;height:22px"></div>
<div class="vd" style="left:485px;top:508px;height:22px"></div>
<div class="vd" style="left:583px;top:508px;height:22px"></div>
<div class="vd" style="left:698px;top:508px;height:22px"></div>
<div class="t" style="left:127.74px;top:513px;font-size:11px;color:#000;transform:scaleX(0.9586)">Имя файла</div><div class="t" style="left:324.98px;top:513px;font-size:11px;color:#000;transform:scaleX(1.0233)">Папка</div><div class="t" style="left:423.05px;top:513px;font-size:11px;color:#000;transform:scaleX(1.0486)">Размер</div><div class="t" style="left:489.18px;top:513px;font-size:11px;color:#000;transform:scaleX(1.0220)">Продолжитель...</div><div class="t" style="left:588.30px;top:513px;font-size:11px;color:#000;transform:scaleX(1.0090)">Установить диапа...</div>
<div class="t" style="left:145.20px;top:534px;font-size:11px;color:#000;transform:scaleX(0.9779)">Audio-01.mp3</div><div class="t" style="left:425.20px;top:534px;font-size:11px;color:#000;transform:scaleX(0.9733)">7.12M</div><div class="t" style="left:491.00px;top:534px;font-size:11px;color:#000;transform:scaleX(1.0047)">00:03:06</div>
<svg style="left:129px;top:531px" width="13" height="15"><path d="M0.5 0.5H9L12.5 4V14.5H0.5Z" fill="#fafafa" stroke="#8a8a8a"/><path d="M6.5 2.5V10" stroke="#1f7fd0" stroke-width="1.6"/><ellipse cx="4.6" cy="10.3" rx="2.4" ry="2" fill="#1f7fd0"/><path d="M6.5 2.5Q9 4 9 6.5" stroke="#1f7fd0" stroke-width="1.4" fill="none"/></svg>
<div class="t" style="left:145.20px;top:551px;font-size:11px;color:#000;transform:scaleX(0.9779)">Audio-02.mp3</div><div class="t" style="left:425.20px;top:551px;font-size:11px;color:#000;transform:scaleX(0.9733)">6.64M</div><div class="t" style="left:491.00px;top:551px;font-size:11px;color:#000;transform:scaleX(1.0047)">00:02:54</div>
<svg style="left:129px;top:548px" width="13" height="15"><path d="M0.5 0.5H9L12.5 4V14.5H0.5Z" fill="#fafafa" stroke="#8a8a8a"/><path d="M6.5 2.5V10" stroke="#1f7fd0" stroke-width="1.6"/><ellipse cx="4.6" cy="10.3" rx="2.4" ry="2" fill="#1f7fd0"/><path d="M6.5 2.5Q9 4 9 6.5" stroke="#1f7fd0" stroke-width="1.4" fill="none"/></svg>
<div class="t" style="left:145.20px;top:568px;font-size:11px;color:#000;transform:scaleX(0.9779)">Audio-03.mp3</div><div class="t" style="left:425.20px;top:568px;font-size:11px;color:#000;transform:scaleX(0.9733)">4.15M</div><div class="t" style="left:491.00px;top:568px;font-size:11px;color:#000;transform:scaleX(1.0047)">00:04:32</div>
<svg style="left:129px;top:565px" width="13" height="15"><path d="M0.5 0.5H9L12.5 4V14.5H0.5Z" fill="#fafafa" stroke="#8a8a8a"/><path d="M6.5 2.5V10" stroke="#1f7fd0" stroke-width="1.6"/><ellipse cx="4.6" cy="10.3" rx="2.4" ry="2" fill="#1f7fd0"/><path d="M6.5 2.5Q9 4 9 6.5" stroke="#1f7fd0" stroke-width="1.4" fill="none"/></svg>
<div class="t" style="left:145.20px;top:585px;font-size:11px;color:#000;transform:scaleX(0.9779)">Audio-05.mp3</div><div class="t" style="left:425.20px;top:585px;font-size:11px;color:#000;transform:scaleX(0.9733)">8.84M</div><div class="t" style="left:491.00px;top:585px;font-size:11px;color:#000;transform:scaleX(1.0047)">00:03:32</div>
<svg style="left:129px;top:582px" width="13" height="15"><path d="M0.5 0.5H9L12.5 4V14.5H0.5Z" fill="#fafafa" stroke="#8a8a8a"/><path d="M6.5 2.5V10" stroke="#1f7fd0" stroke-width="1.6"/><ellipse cx="4.6" cy="10.3" rx="2.4" ry="2" fill="#1f7fd0"/><path d="M6.5 2.5Q9 4 9 6.5" stroke="#1f7fd0" stroke-width="1.4" fill="none"/></svg>
<div class="t" style="left:145.20px;top:602px;font-size:11px;color:#000;transform:scaleX(0.9779)">Audio-06.mp3</div><div class="t" style="left:425.20px;top:602px;font-size:11px;color:#000;transform:scaleX(0.9733)">5.91M</div><div class="t" style="left:491.00px;top:602px;font-size:11px;color:#000;transform:scaleX(1.0047)">00:03:13</div>
<svg style="left:129px;top:599px" width="13" height="15"><path d="M0.5 0.5H9L12.5 4V14.5H0.5Z" fill="#fafafa" stroke="#8a8a8a"/><path d="M6.5 2.5V10" stroke="#1f7fd0" stroke-width="1.6"/><ellipse cx="4.6" cy="10.3" rx="2.4" ry="2" fill="#1f7fd0"/><path d="M6.5 2.5Q9 4 9 6.5" stroke="#1f7fd0" stroke-width="1.4" fill="none"/></svg>

<div class="btn" style="left:792px;top:505px;width:157px;height:33px"></div>
<div class="t" style="left:845.60px;top:516px;font-size:11px;color:#000;transform:scaleX(0.9861)">Добавить файл</div>
<div class="btn" style="left:792px;top:553px;width:157px;height:33px"></div>
<div class="t" style="left:871.80px;top:563px;font-size:11px;color:#b0b0b0;transform:scaleX(1.0348)">клип</div>

<div class="a" style="left:305px;top:664px;width:11px;height:11px;border:1px solid #b4b4b4;background:#fff"></div>
<div class="t" style="left:318.52px;top:662px;font-size:11px;color:#000;transform:scaleX(0.9798)">Map To Channels</div><div class="t" style="left:525.70px;top:664px;font-size:11px;color:#000;transform:scaleX(0.9791)">00:17:17</div>
<div class="btn" style="left:653px;top:657px;width:27px;height:26px"></div>
<div class="btn" style="left:687px;top:657px;width:27px;height:26px"></div>
<div class="btn" style="left:722px;top:657px;width:27px;height:26px"></div>
<div class="btn" style="left:756px;top:657px;width:27px;height:26px"></div>
<!-- dialog title icon -->
<svg style="left:98px;top:125px" width="15" height="15">
<circle cx="8" cy="7" r="6.2" fill="#d9dde2" stroke="#8c96a0" stroke-width="0.7"/>
<g fill="#2b3440"><circle cx="8" cy="3.6" r="1.5"/><circle cx="11.3" cy="6" r="1.5"/><circle cx="10" cy="10" r="1.5"/><circle cx="6" cy="10" r="1.5"/><circle cx="4.7" cy="6" r="1.5"/></g>
<path d="M3 5Q1 10 1.5 13.5L4 14" stroke="#1d5fa8" stroke-width="1.7" fill="none"/></svg>

<!-- MKV file icon -->
<svg style="left:121px;top:190px" width="28" height="33"><defs>
<linearGradient id="mkvp" x1="0" y1="0" x2="1" y2="1"><stop offset="0" stop-color="#ffffff"/><stop offset="1" stop-color="#e6e6e6"/></linearGradient>
<linearGradient id="mkvg" x1="0" y1="0" x2="0" y2="1"><stop offset="0" stop-color="#8cd04a"/><stop offset="1" stop-color="#3f9a14"/></linearGradient></defs>
<path d="M3.5 1H19L27 8.5V31.5H3.5Z" fill="url(#mkvp)" stroke="#c8c8c8" stroke-width="0.8"/>
<path d="M19 1V8.5H27" fill="#f0f0f0" stroke="#cfcfcf" stroke-width="0.7"/>
<rect x="0" y="2.8" width="17.5" height="7.4" rx="1" fill="url(#mkvg)"/>
<text x="1.6" y="9.2" font-family="Liberation Sans" font-size="7" font-weight="bold" fill="#fff">MKV</text>
<path d="M8 14.5L21.5 11.5L22.3 14.5L8.8 17.5Z" fill="#1e1e1e"/>
<path d="M8.5 17.5H23.5V27L9.5 27Z" fill="#1e1e1e" transform="rotate(-8 15 22)"/>
<g fill="#ddd"><path d="M11 13.9L13 13.4L13.4 15.9L11.4 16.4Z"/><path d="M15.5 12.9L17.5 12.4L17.9 14.9L15.9 15.4Z"/></g>
<path d="M11 21L21 19.5M11 23.5L21 22" stroke="#777" stroke-width="0.7"/></svg>

<!-- small gear in quality button -->
<svg style="left:308px;top:194px" width="25" height="25"><defs>
<radialGradient id="sgg" cx="0.55" cy="0.6" r="0.6"><stop offset="0" stop-color="#3b82e0"/><stop offset="0.7" stop-color="#1c56b4"/><stop offset="1" stop-color="#0e3f8c"/></radialGradient></defs>
<g transform="translate(0.5 0.5) scale(0.7)"><path d="M15.01 4.36L15.51 1.57L18.49 1.57L18.99 4.36L21.35 4.99L23.17 2.83L25.75 4.32L24.79 6.98L26.52 8.71L29.18 7.75L30.67 10.33L28.51 12.15L29.14 14.51L31.93 15.01L31.93 17.99L29.14 18.49L28.51 20.85L30.67 22.67L29.18 25.25L26.52 24.29L24.79 26.02L25.75 28.68L23.17 30.17L21.35 28.01L18.99 28.64L18.49 31.43L15.51 31.43L15.01 28.64L12.65 28.01L10.83 30.17L8.25 28.68L9.21 26.02L7.48 24.29L4.82 25.25L3.33 22.67L5.49 20.85L4.86 18.49L2.07 17.99L2.07 15.01L4.86 14.51L5.49 12.15L3.33 10.33L4.82 7.75L7.48 8.71L9.21 6.98L8.25 4.32L10.83 2.83L12.65 4.99Z" fill="#efefef" stroke="#a0a0a0" stroke-width="1.1"/>
<circle cx="17" cy="16.2" r="8" fill="url(#sgg)"/>
<path d="M15.5 10.5Q12 13 13.5 18Q15 21 18 22.5Q14.5 18 15.5 14Q16.5 11.5 18.5 11.8Q17.5 9.8 15.5 10.5Z" fill="#e8eef6"/></g></svg>

<!-- multiplexer icon -->
<svg style="left:842px;top:154px" width="50" height="50"><defs>
<radialGradient id="reel" cx="0.4" cy="0.35" r="0.7"><stop offset="0" stop-color="#f4f4f4"/><stop offset="0.7" stop-color="#c8c8c8"/><stop offset="1" stop-color="#8a8a8a"/></radialGradient>
<linearGradient id="film" x1="0" y1="0" x2="0" y2="1"><stop offset="0" stop-color="#7fd0f4"/><stop offset="1" stop-color="#1e86c8"/></linearGradient></defs>
<circle cx="13" cy="13" r="11.2" fill="url(#reel)" stroke="#9a9a9a" stroke-width="0.6"/>
<g fill="#3a2e28"><circle cx="13" cy="6.3" r="2.7"/><circle cx="19.4" cy="10.8" r="2.7"/><circle cx="17" cy="18.5" r="2.7"/><circle cx="9" cy="18.5" r="2.7"/><circle cx="6.6" cy="10.8" r="2.7"/></g>
<path d="M2.3 26.5H16.5L21 31V48.3H2.3Z" fill="#efefef" stroke="#c0c0c0" stroke-width="0.8"/>
<path d="M8 32V42M14 31V40" stroke="#3cbf2e" stroke-width="1.5"/><path d="M8 32L14 31V33L8 34Z" fill="#3cbf2e"/><ellipse cx="6.5" cy="42.5" rx="2" ry="1.6" fill="#3cbf2e"/><ellipse cx="12.5" cy="40.5" rx="2" ry="1.6" fill="#3cbf2e"/>
<path d="M20 20Q25 23 27 27.5M20 36Q25 33 27 29.5M25 27.5H31" stroke="#7ed33a" stroke-width="2.6" fill="none"/>
<path d="M28 24L32 28.5L28 33Z" fill="#7ed33a"/>
<rect x="30" y="16.5" width="17.5" height="19.5" fill="#111"/>
<rect x="33.5" y="17.5" width="10.5" height="17.5" fill="url(#film)"/>
<path d="M33.5 23H44M33.5 29H44" stroke="#0c5a90" stroke-width="0.6"/>
<g fill="#fff"><rect x="31" y="18" width="1.6" height="1.6"/><rect x="31" y="21.5" width="1.6" height="1.6"/><rect x="31" y="25" width="1.6" height="1.6"/><rect x="31" y="28.5" width="1.6" height="1.6"/><rect x="31" y="32" width="1.6" height="1.6"/>
<rect x="45" y="18" width="1.6" height="1.6"/><rect x="45" y="21.5" width="1.6" height="1.6"/><rect x="45" y="25" width="1.6" height="1.6"/><rect x="45" y="28.5" width="1.6" height="1.6"/><rect x="45" y="32" width="1.6" height="1.6"/></g>
</svg>

<!-- OK arrow -->
<svg style="left:801px;top:218px" width="21" height="22"><defs>
<linearGradient id="oa1" x1="0" y1="0" x2="1" y2="0"><stop offset="0" stop-color="#fff4e0"/><stop offset="1" stop-color="#fbb06a"/></linearGradient>
<linearGradient id="oa2" x1="0" y1="0" x2="1" y2="0"><stop offset="0" stop-color="#ff9a2a"/><stop offset="1" stop-color="#ff6a00"/></linearGradient></defs>
<rect x="0.5" y="4" width="11" height="13" fill="url(#oa1)"/>
<path d="M9.5 0L20 10.5L9.5 21Q12.5 10.5 9.5 0Z" fill="url(#oa2)"/></svg>

<!-- plus icons -->
<svg style="left:799px;top:293px" width="24" height="24"><defs><linearGradient id="plg" x1="0" y1="0" x2="1" y2="1"><stop offset="0" stop-color="#ffc27a"/><stop offset="0.5" stop-color="#ff8a10"/><stop offset="1" stop-color="#ff7000"/></linearGradient></defs>
<path d="M9 0.5H14.5V9.5H23V15H14.5V23.5H9V15H0.5V9.5H9Z" fill="url(#plg)" stroke="#f59a40" stroke-width="0.5"/></svg>
<svg style="left:799px;top:509px" width="24" height="24">
<path d="M9 0.5H14.5V9.5H23V15H14.5V23.5H9V15H0.5V9.5H9Z" fill="url(#plg)" stroke="#f59a40" stroke-width="0.5"/></svg>

<!-- clip icons -->
<svg style="left:801px;top:342px" width="22" height="19"><defs><linearGradient id="clg" x1="0" y1="0" x2="0" y2="1"><stop offset="0" stop-color="#fbe1c4"/><stop offset="1" stop-color="#f1c08e"/></linearGradient></defs>
<rect x="0.5" y="0.5" width="14" height="18" fill="#bdbdbd"/><rect x="3" y="1" width="9" height="7.5" fill="url(#clg)"/><rect x="3" y="10" width="9" height="7.5" fill="url(#clg)"/>
<g fill="#eee"><rect x="1" y="2" width="1" height="1"/><rect x="1" y="5" width="1" height="1"/><rect x="1" y="8" width="1" height="1"/><rect x="1" y="11" width="1" height="1"/><rect x="1" y="14" width="1" height="1"/><rect x="13" y="2" width="1" height="1"/><rect x="13" y="5" width="1" height="1"/></g>
<path d="M13 3L15 13M17 3L14 13" stroke="#aaa" stroke-width="0.8"/><circle cx="13.5" cy="15.5" r="2.3" fill="none" stroke="#e07070" stroke-width="1.1"/><circle cx="18.5" cy="15.5" r="2.3" fill="none" stroke="#e07070" stroke-width="1.1"/></svg>
<svg style="left:801px;top:559px" width="22" height="19">
<rect x="0.5" y="0.5" width="14" height="18" fill="#bdbdbd"/><rect x="3" y="1" width="9" height="7.5" fill="url(#clg)"/><rect x="3" y="10" width="9" height="7.5" fill="url(#clg)"/>
<g fill="#eee"><rect x="1" y="2" width="1" height="1"/><rect x="1" y="5" width="1" height="1"/><rect x="1" y="8" width="1" height="1"/><rect x="1" y="11" width="1" height="1"/><rect x="1" y="14" width="1" height="1"/><rect x="13" y="2" width="1" height="1"/><rect x="13" y="5" width="1" height="1"/></g>
<path d="M13 3L15 13M17 3L14 13" stroke="#aaa" stroke-width="0.8"/><circle cx="13.5" cy="15.5" r="2.3" fill="none" stroke="#e07070" stroke-width="1.1"/><circle cx="18.5" cy="15.5" r="2.3" fill="none" stroke="#e07070" stroke-width="1.1"/></svg>

<!-- clapperboard -->
<svg style="left:840px;top:384px" width="70" height="76"><defs>
<linearGradient id="scr" x1="0" y1="0" x2="0" y2="1"><stop offset="0" stop-color="#4f7fc6"/><stop offset="0.6" stop-color="#7ea3da"/><stop offset="1" stop-color="#a9c3ea"/></linearGradient>
<linearGradient id="bdy" x1="0" y1="0" x2="0" y2="1"><stop offset="0" stop-color="#3a3a3a"/><stop offset="1" stop-color="#1a1a1a"/></linearGradient></defs>
<rect x="1.5" y="19.5" width="65.5" height="54" fill="url(#bdy)"/>
<rect x="1.5" y="19.5" width="65.5" height="9" fill="#e8e8e8"/>
<g fill="#1c1c1c"><path d="M6 19.5H12L16 28.5H10Z"/><path d="M19 19.5H25L29 28.5H23Z"/><path d="M32 19.5H38L42 28.5H36Z"/><path d="M45 19.5H51L55 28.5H49Z"/><path d="M58 19.5H64L67 26V28.5H62Z"/></g>
<path d="M1.5 11L66.5 2.5V10.5L1.5 19Z" fill="#ececec"/>
<g fill="#1c1c1c"><path d="M6 10.4L13 9.5L10 18.4L3 19.3Z"/><path d="M19 8.7L26 7.8L23 16.7L16 17.6Z"/><path d="M32 7L39 6.1L36 15L29 15.9Z"/><path d="M45 5.3L52 4.4L49 13.3L42 14.2Z"/><path d="M58 3.6L65 2.7L66.5 3V10.5L55 12Z"/></g>
<path d="M1.5 11L9 15.5L1.5 19Z" fill="#d8d8d8"/>
<rect x="8.5" y="34" width="51" height="33.5" fill="url(#scr)" stroke="#2a4f8a" stroke-width="0.6"/>
<path d="M8.5 34H59.5" stroke="#9a9a9a" stroke-width="1"/>
<path d="M26 39L46 50.5L26 62Z" fill="#dcdcdc"/></svg>

<!-- up/down arrows (video & audio) -->
<svg style="left:125px;top:444px" width="15" height="16"><defs><linearGradient id="arw" x1="0" y1="0" x2="1" y2="1"><stop offset="0" stop-color="#fff0d8"/><stop offset="1" stop-color="#f8b27a"/></linearGradient></defs>
<path d="M7.5 1L14 7.8H12V14.8H2.5V7.8H0.5Z" fill="url(#arw)" stroke="#f2a170" stroke-width="0.9"/></svg>
<svg style="left:163px;top:445px" width="15" height="16">
<path d="M2.5 0.5H12V7.3H14L7.5 14L0.5 7.3H2.5Z" fill="url(#arw)" stroke="#f2a170" stroke-width="0.9"/></svg>
<svg style="left:125px;top:661px" width="15" height="16">
<path d="M7.5 1L14 7.8H12V14.8H2.5V7.8H0.5Z" fill="url(#arw)" stroke="#f2a170" stroke-width="0.9"/></svg>
<svg style="left:163px;top:662px" width="15" height="16">
<path d="M2.5 0.5H12V7.3H14L7.5 14L0.5 7.3H2.5Z" fill="url(#arw)" stroke="#f2a170" stroke-width="0.9"/></svg>

<!-- speaker mute -->
<svg style="left:268px;top:439px" width="26" height="26"><defs><radialGradient id="spk" cx="0.45" cy="0.5" r="0.6"><stop offset="0" stop-color="#d8d8d8"/><stop offset="0.8" stop-color="#a8a8a8"/><stop offset="1" stop-color="#5a5a5a"/></radialGradient></defs>
<defs><linearGradient id="spb" x1="0" y1="0" x2="1" y2="0"><stop offset="0" stop-color="#5a5a5a"/><stop offset="0.5" stop-color="#9a9a9a"/><stop offset="1" stop-color="#6a6a6a"/></linearGradient></defs><ellipse cx="17" cy="10.5" rx="7.5" ry="8.5" fill="url(#spb)"/>
<ellipse cx="9" cy="12.5" rx="8" ry="11.8" fill="url(#spk)" stroke="#555" stroke-width="1.1"/>
<ellipse cx="9" cy="12.5" rx="5.8" ry="9.5" fill="none" stroke="#eee" stroke-width="0.6"/>
<circle cx="18" cy="18.3" r="6.3" fill="#e0402a" stroke="#fff" stroke-width="0.6"/>
<path d="M15.3 15.6L20.7 21M20.7 15.6L15.3 21" stroke="#fff" stroke-width="2"/></svg>

<!-- jack -->
<svg style="left:268px;top:662px" width="26" height="9"><defs><linearGradient id="jk" x1="0" y1="0" x2="0" y2="1"><stop offset="0" stop-color="#d0d0d0"/><stop offset="0.5" stop-color="#8a8a8a"/><stop offset="1" stop-color="#6a6a6a"/></linearGradient></defs>
<rect x="0.5" y="0.5" width="3.5" height="8" rx="1" fill="#1c1c1c"/><rect x="4" y="2.5" width="21" height="4" fill="url(#jk)"/>
<path d="M14 2.5V6.5M17.5 2.5V6.5M21 2.5V6.5" stroke="#333" stroke-width="0.8"/></svg>

<!-- small button icons -->
<svg style="left:659px;top:444px" width="15" height="17"><path d="M0.5 0.5H8L11.5 4V14.5H0.5Z" fill="#f6f6f6" stroke="#c8c8c8" stroke-width="0.8"/><circle cx="10.5" cy="12" r="3.6" fill="#e88a8a"/><rect x="8.5" y="11.3" width="4" height="1.4" fill="#fff"/></svg>
<svg style="left:691px;top:444px" width="17" height="17"><path d="M3 0.5H11L15 4.5V14.5H3Z" fill="#f6f6f6" stroke="#bdbdbd" stroke-width="0.8"/><path d="M1.5 8.5L8 15M8 8.5L1.5 15" stroke="#d81818" stroke-width="1.5"/></svg>
<svg style="left:729px;top:445px" width="14" height="14"><circle cx="7" cy="7" r="6.3" fill="#f5a46a" stroke="#eec0a0" stroke-width="0.6"/><path d="M5 3.5L10 7L5 10.5Z" fill="#fff"/></svg>
<svg style="left:761px;top:446px" width="16" height="13"><rect x="0.5" y="0.5" width="15" height="12" fill="#f4f6f8" stroke="#b8bcc0" stroke-width="0.8"/><rect x="0.5" y="0.5" width="15" height="2.5" fill="#dde3ea"/><rect x="2.5" y="5" width="5" height="5" fill="#9cc8ee"/><path d="M9 5.5H14M9 7.5H14M9 9.5H14" stroke="#b0b8c0" stroke-width="0.8"/></svg>
<svg style="left:659px;top:662px" width="15" height="17"><path d="M0.5 0.5H8L11.5 4V14.5H0.5Z" fill="#f6f6f6" stroke="#c8c8c8" stroke-width="0.8"/><circle cx="10.5" cy="12" r="3.6" fill="#e88a8a"/><rect x="8.5" y="11.3" width="4" height="1.4" fill="#fff"/></svg>
<svg style="left:691px;top:662px" width="17" height="17"><path d="M3 0.5H11L15 4.5V14.5H3Z" fill="#f6f6f6" stroke="#bdbdbd" stroke-width="0.8"/><path d="M1.5 8.5L8 15M8 8.5L1.5 15" stroke="#d81818" stroke-width="1.5"/></svg>
<svg style="left:729px;top:663px" width="14" height="14"><circle cx="7" cy="7" r="6.3" fill="#f5a46a" stroke="#eec0a0" stroke-width="0.6"/><path d="M5 3.5L10 7L5 10.5Z" fill="#fff"/></svg>
<svg style="left:761px;top:664px" width="16" height="13"><rect x="0.5" y="0.5" width="15" height="12" fill="#f4f6f8" stroke="#b8bcc0" stroke-width="0.8"/><rect x="0.5" y="0.5" width="15" height="2.5" fill="#dde3ea"/><rect x="2.5" y="5" width="5" height="5" fill="#9cc8ee"/><path d="M9 5.5H14M9 7.5H14M9 9.5H14" stroke="#b0b8c0" stroke-width="0.8"/></svg>

<!-- headphones -->
<svg style="left:836px;top:606px" width="78" height="74">
<path d="M4.5 41Q3 4 39 3.6Q75 4 73.5 41" fill="none" stroke="#4a3e3e" stroke-width="4.6"/>
<path d="M5 38L6.5 50H10.5L9 38Z" fill="#4a3e3e"/><path d="M73 38L71.5 50H67.5L69 38Z" fill="#4a3e3e"/>
<rect x="6" y="48" width="4.5" height="13" fill="#7a6e6e"/><rect x="67.5" y="48" width="4.5" height="13" fill="#7a6e6e"/>
<path d="M10.5 46Q15 45 15 48V63Q15 66 10.5 65Z" fill="#3c3232"/><path d="M67.5 46Q63 45 63 48V63Q63 66 67.5 65Z" fill="#3c3232"/>
<rect x="15" y="38" width="13.5" height="34.5" rx="6.7" fill="#ef4444"/>
<rect x="49.5" y="38" width="13.5" height="34.5" rx="6.7" fill="#ef4444"/></svg>


</body></html>
